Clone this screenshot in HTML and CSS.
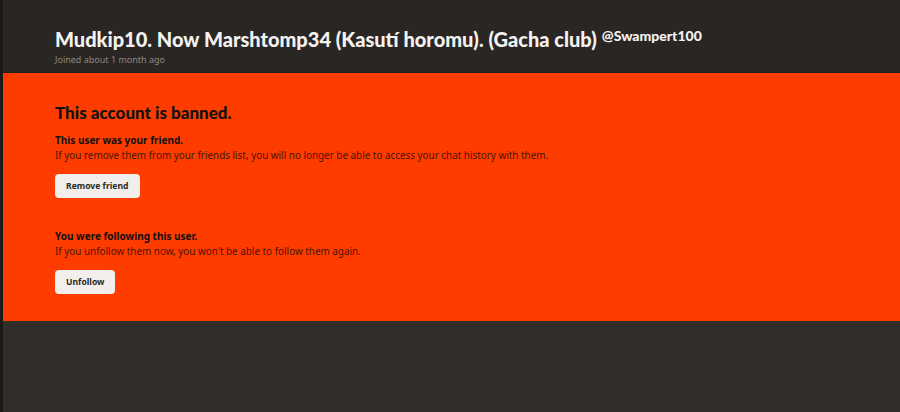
FILE: index.html
```html
<!DOCTYPE html>
<html lang="en">
<head>
    <meta charset="UTF-8">
    <meta name="viewport" content="width=device-width, initial-scale=1.0">
    <title>Swampert100</title>
    <link rel="stylesheet" href="styles.css">
</head>
<body>

<div class="page">
    <!-- Profile header -->
    <header class="profile-header">
        <h1 class="display-name">
            Mudkip10. Now Marshtomp34 (Kasutí horomu). (Gacha club)
            <span class="username">@Swampert100</span>
        </h1>
        <p class="joined">Joined about 1 month ago</p>
    </header>

    <!-- Banned notice -->
    <section class="banned">
        <h2>This account is banned.</h2>

        <div class="banned-block">
            <h3>This user was your friend.</h3>
            <p>If you remove them from your friends list, you will no longer be able to access your chat history with them.</p>
            <button type="button">Remove friend</button>
        </div>

        <div class="banned-block">
            <h3>You were following this user.</h3>
            <p>If you unfollow them now, you won't be able to follow them again.</p>
            <button type="button">Unfollow</button>
        </div>
    </section>
</div>

</body>
</html>
```

FILE: styles.css
```css
html, body {
    margin: 0;
    height: 100%;
}

body {
    font-family: "Noto Sans", sans-serif;
    background-color: #302d2b;
    border-left: 3px solid #1c1918;
}

.page {
    min-height: 100%;
}

.profile-header {
    background-color: #2a2624;
    height: 73px;
    padding: 27px 0 0 52px;
    box-sizing: border-box;
    border-bottom: 1px solid #231f1d;
}

.display-name {
    margin: 0;
    font-family: Lato, sans-serif;
    font-size: 20px;
    font-weight: 900;
    line-height: 24px;
    color: #f4f2f0;
    display: flex;
    align-items: flex-start;
    gap: 5px;
}

.username {
    font-size: 14px;
    line-height: 20px;
    margin-top: -1px;
}

.joined {
    margin: 2px 0 0;
    font-size: 9px;
    color: #8c8784;
}

.banned {
    background-color: #ff3c00;
    padding: 28px 52px 28px;
    height: 248px;
    box-sizing: border-box;
}

.banned h2 {
    margin: 0 0 8px;
    font-family: Lato, sans-serif;
    font-size: 17px;
    font-weight: 900;
    line-height: 24px;
    color: #111;
}

.banned-block {
    margin-bottom: 31px;
}

.banned-block h3 {
    margin: 0;
    font-size: 10px;
    font-weight: 700;
    line-height: 14px;
    color: #111;
}

.banned-block p {
    margin: 0 0 9px;
    font-size: 9.9px;
    line-height: 16px;
    color: #4a1300;
}

.banned-block button {
    font-family: "Noto Sans", sans-serif;
    font-size: 8.6px;
    font-weight: 700;
    color: #2b2826;
    background-color: #f1eeeb;
    border: none;
    border-radius: 4px;
    padding: 0 11px;
    height: 24px;
    cursor: pointer;
}
```
